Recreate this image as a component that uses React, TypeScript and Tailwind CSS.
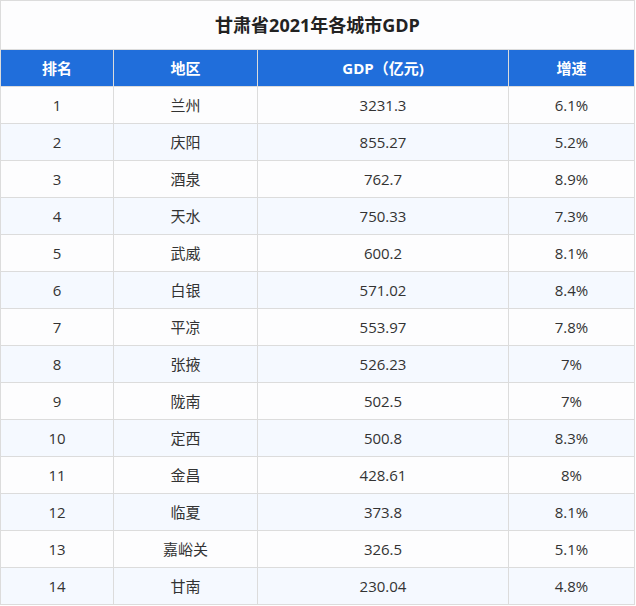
const rows = [
  ['1', '兰州', '3231.3', '6.1%'],
  ['2', '庆阳', '855.27', '5.2%'],
  ['3', '酒泉', '762.7', '8.9%'],
  ['4', '天水', '750.33', '7.3%'],
  ['5', '武威', '600.2', '8.1%'],
  ['6', '白银', '571.02', '8.4%'],
  ['7', '平凉', '553.97', '7.8%'],
  ['8', '张掖', '526.23', '7%'],
  ['9', '陇南', '502.5', '7%'],
  ['10', '定西', '500.8', '8.3%'],
  ['11', '金昌', '428.61', '8%'],
  ['12', '临夏', '373.8', '8.1%'],
  ['13', '嘉峪关', '326.5', '5.1%'],
  ['14', '甘南', '230.04', '4.8%'],
];

export default function App() {
  return (
    <div className="w-[636px] h-[606px] bg-white font-['Open_Sans','Noto_Sans_CJK_SC',sans-serif]">
      <table className="w-[634px] border-collapse table-fixed border border-[#dcdcdc] bg-[#fdfdfe] text-[15px] text-[#333]">
        <colgroup>
          <col className="w-[113px]" />
          <col className="w-[144px]" />
          <col className="w-[251px]" />
          <col className="w-[126px]" />
        </colgroup>
        <thead>
          <tr className="h-[49px]">
            <th colSpan={4} className="border border-[#dcdcdc] text-[18px] font-bold text-[#222]">
              甘肃省2021年各城市GDP
            </th>
          </tr>
          <tr className="h-[37px] bg-[#206edb] text-white">
            <th className="border border-[#dcdcdc] font-bold">排名</th>
            <th className="border border-[#dcdcdc] font-bold">地区</th>
            <th className="border border-[#dcdcdc] font-bold">GDP（亿元)</th>
            <th className="border border-[#dcdcdc] font-bold">增速</th>
          </tr>
        </thead>
        <tbody>
          {rows.map((r, i) => (
            <tr key={r[0]} className={`h-[37px] ${i % 2 === 1 ? 'bg-[#f5f9ff]' : ''}`}>
              {r.map((c, j) => (
                <td key={j} className="border border-[#dcdcdc] text-center p-0">
                  {c}
                </td>
              ))}
            </tr>
          ))}
        </tbody>
      </table>
    </div>
  );
}
